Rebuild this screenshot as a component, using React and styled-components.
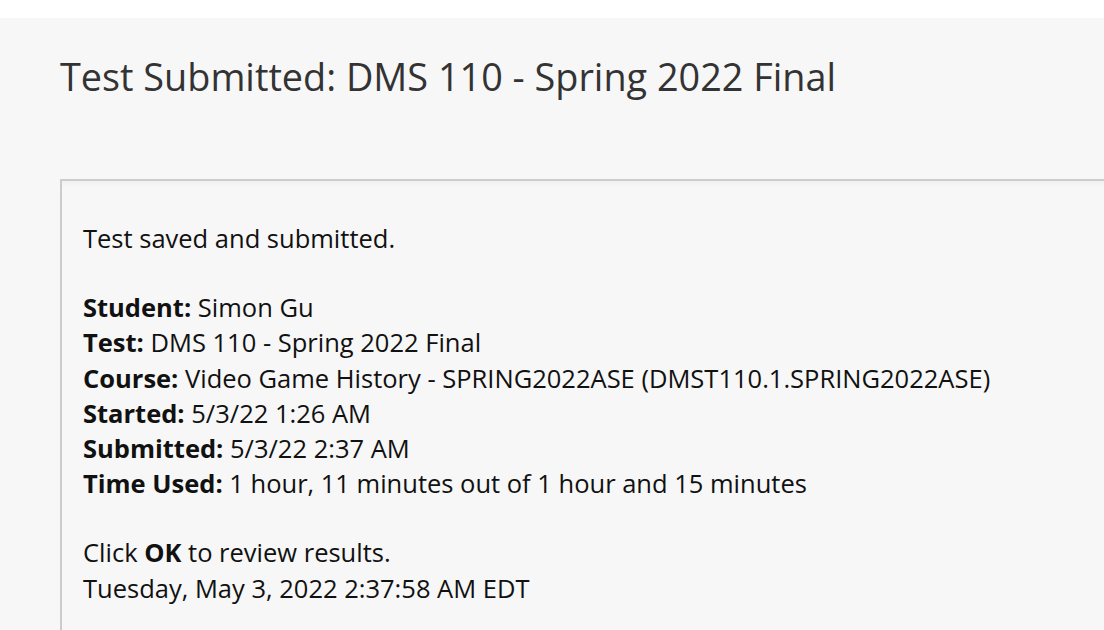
import React from 'react'
import styled, { createGlobalStyle } from 'styled-components'

const GlobalStyle = createGlobalStyle`
  html, body {
    margin: 0;
    padding: 0;
    background: #ffffff;
    font-family: "Open Sans", "Noto Sans", sans-serif;
  }
`

const Page = styled.main`
  margin-top: 18px;
  background: #f7f7f7;
  height: 612px;
  padding: 36px 0 0 60px;
  box-sizing: border-box;
  overflow: hidden;
`

const Title = styled.h1`
  margin: 0;
  font-size: 37.8px;
  font-weight: 400;
  line-height: 46px;
  color: #333333;
`

const Receipt = styled.section`
  margin-top: 79px;
  width: 1100px;
  border: 2px solid #cccccc;
  border-right: none;
  border-bottom: none;
  box-shadow: inset 0 6px 6px -4px rgba(0, 0, 0, 0.04);
  padding: 40px 0 40px 21px;
  color: #111111;
  font-size: 25.5px;
  line-height: 35.2px;
`

const Para = styled.p`
  margin: 0 0 34px 0;
`

const Label = styled.strong`
  font-weight: 700;
`

const rows = [
  ['Student:', 'Simon Gu'],
  ['Test:', 'DMS 110 - Spring 2022 Final'],
  ['Course:', 'Video Game History - SPRING2022ASE (DMST110.1.SPRING2022ASE)'],
  ['Started:', '5/3/22 1:26 AM'],
  ['Submitted:', '5/3/22 2:37 AM'],
  ['Time Used:', '1 hour, 11 minutes out of 1 hour and 15 minutes'],
]

export default function App() {
  return (
    <>
      <GlobalStyle />
      <Page>
        <Title>Test Submitted: DMS 110 - Spring 2022 Final</Title>
        <Receipt>
          <Para>Test saved and submitted.</Para>
          <Para>
            {rows.map(([k, v]) => (
              <React.Fragment key={k}>
                <Label>{k}</Label> {v}
                <br />
              </React.Fragment>
            ))}
          </Para>
          <Para>
            Click <Label>OK</Label> to review results.
            <br />
            Tuesday, May 3, 2022 2:37:58 AM EDT
          </Para>
        </Receipt>
      </Page>
    </>
  )
}
